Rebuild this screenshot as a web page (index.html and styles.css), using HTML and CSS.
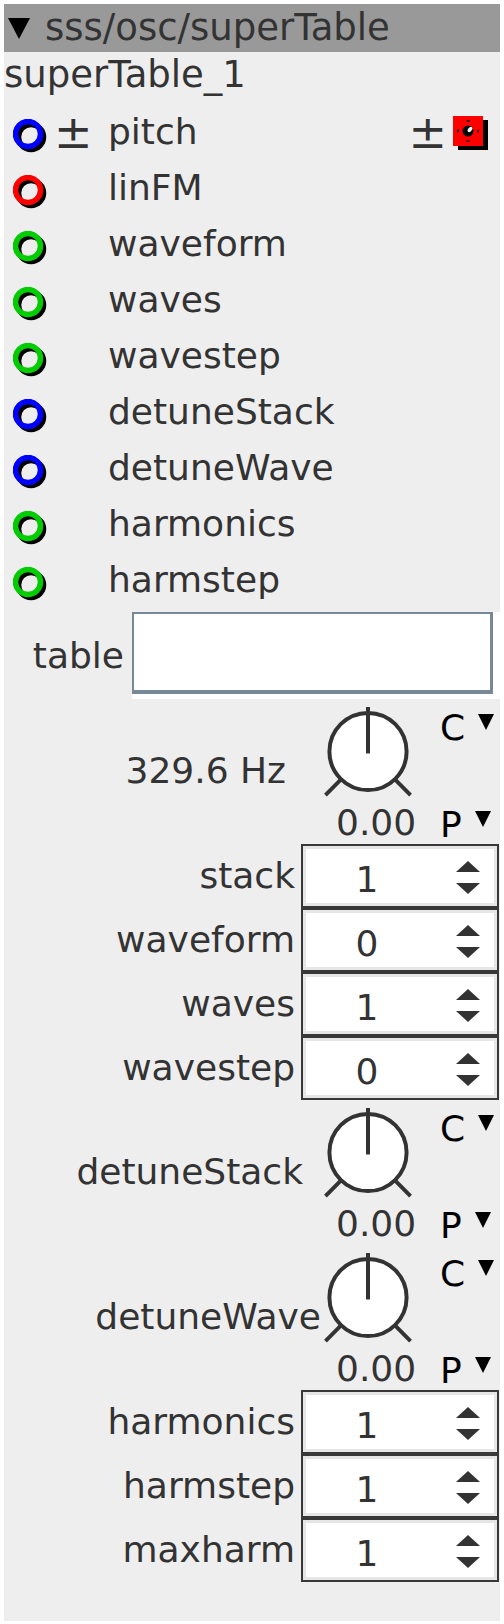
FILE: index.html
```html
<!DOCTYPE html>
<html lang="en">
<head>
    <meta charset="UTF-8">
    <meta name="viewport" content="width=device-width, initial-scale=1.0">
    <link rel="stylesheet" href="styles.css">
    <title>sss/osc/superTable</title>
</head>
<body>
    <div class="node">
        <div class="node-head"><span class="head-caret"></span>sss/osc/superTable</div>
        <div class="node-name">superTable_1</div>

        <ul class="ports">
            <li class="port">
                <svg class="jack jack-blue" viewBox="0 0 36 36"><circle class="jack-shadow" cx="18" cy="18" r="12.5"/><circle class="jack-ring" cx="15" cy="15" r="12.5"/><ellipse class="jack-shine" cx="19" cy="14" rx="2" ry="3.5"/></svg>
                <span class="sign">±</span>
                <span class="port-name">pitch</span>
                <span class="port-out">
                    <span class="sign-out">±</span>
                    <svg class="out-jack" viewBox="0 0 36 36"><rect x="5" y="4" width="30" height="30" fill="#000"/><rect x="0" y="0" width="30" height="30" fill="#f00"/><circle cx="15" cy="15" r="10" class="out-dots"/><circle cx="15" cy="15" r="5.5" fill="#000"/><ellipse cx="17" cy="13.5" rx="1.8" ry="3" fill="#fff" transform="rotate(40 17 13.5)"/></svg>
                </span>
            </li>
            <li class="port">
                <svg class="jack jack-red" viewBox="0 0 36 36"><circle class="jack-shadow" cx="18" cy="18" r="12.5"/><circle class="jack-ring" cx="15" cy="15" r="12.5"/><ellipse class="jack-shine" cx="19" cy="14" rx="2" ry="3.5"/></svg>
                <span class="sign"></span>
                <span class="port-name">linFM</span>
            </li>
            <li class="port">
                <svg class="jack jack-green" viewBox="0 0 36 36"><circle class="jack-shadow" cx="18" cy="18" r="12.5"/><circle class="jack-ring" cx="15" cy="15" r="12.5"/><ellipse class="jack-shine" cx="19" cy="14" rx="2" ry="3.5"/></svg>
                <span class="sign"></span>
                <span class="port-name">waveform</span>
            </li>
            <li class="port">
                <svg class="jack jack-green" viewBox="0 0 36 36"><circle class="jack-shadow" cx="18" cy="18" r="12.5"/><circle class="jack-ring" cx="15" cy="15" r="12.5"/><ellipse class="jack-shine" cx="19" cy="14" rx="2" ry="3.5"/></svg>
                <span class="sign"></span>
                <span class="port-name">waves</span>
            </li>
            <li class="port">
                <svg class="jack jack-green" viewBox="0 0 36 36"><circle class="jack-shadow" cx="18" cy="18" r="12.5"/><circle class="jack-ring" cx="15" cy="15" r="12.5"/><ellipse class="jack-shine" cx="19" cy="14" rx="2" ry="3.5"/></svg>
                <span class="sign"></span>
                <span class="port-name">wavestep</span>
            </li>
            <li class="port">
                <svg class="jack jack-blue" viewBox="0 0 36 36"><circle class="jack-shadow" cx="18" cy="18" r="12.5"/><circle class="jack-ring" cx="15" cy="15" r="12.5"/><ellipse class="jack-shine" cx="19" cy="14" rx="2" ry="3.5"/></svg>
                <span class="sign"></span>
                <span class="port-name">detuneStack</span>
            </li>
            <li class="port">
                <svg class="jack jack-blue" viewBox="0 0 36 36"><circle class="jack-shadow" cx="18" cy="18" r="12.5"/><circle class="jack-ring" cx="15" cy="15" r="12.5"/><ellipse class="jack-shine" cx="19" cy="14" rx="2" ry="3.5"/></svg>
                <span class="sign"></span>
                <span class="port-name">detuneWave</span>
            </li>
            <li class="port">
                <svg class="jack jack-green" viewBox="0 0 36 36"><circle class="jack-shadow" cx="18" cy="18" r="12.5"/><circle class="jack-ring" cx="15" cy="15" r="12.5"/><ellipse class="jack-shine" cx="19" cy="14" rx="2" ry="3.5"/></svg>
                <span class="sign"></span>
                <span class="port-name">harmonics</span>
            </li>
            <li class="port">
                <svg class="jack jack-green" viewBox="0 0 36 36"><circle class="jack-shadow" cx="18" cy="18" r="12.5"/><circle class="jack-ring" cx="15" cy="15" r="12.5"/><ellipse class="jack-shine" cx="19" cy="14" rx="2" ry="3.5"/></svg>
                <span class="sign"></span>
                <span class="port-name">harmstep</span>
            </li>
        </ul>

        <div class="field-row">
            <label class="field-label" for="table">table</label>
            <div class="field-well"><div class="field" id="table"></div></div>
        </div>

        <div class="knob-row">
            <div class="knob-label knob-label-hz">329.6 Hz</div>
            <div class="knob-dial">
                <svg class="knob" viewBox="0 0 92 96"><line x1="20" y1="75" x2="3" y2="92"/><line x1="72" y1="75" x2="89" y2="92"/><circle cx="46" cy="48" r="39"/><line x1="46" y1="3" x2="46" y2="50"/></svg>
                <div class="knob-value">0.00</div>
            </div>
            <div class="knob-side">
                <div class="mode">C<span class="caret"></span></div>
                <div class="mode">P<span class="caret"></span></div>
            </div>
        </div>

        <div class="spin-row">
            <span class="spin-label">stack</span>
            <div class="spin-box"><div class="spin-field"><span class="spin-value">1</span><svg class="spin-arrows" viewBox="0 0 24 36"><polygon points="0,14 12,3 24,14"/><polygon points="0,25 24,25 12,36"/></svg></div></div>
        </div>
        <div class="spin-row">
            <span class="spin-label">waveform</span>
            <div class="spin-box"><div class="spin-field"><span class="spin-value">0</span><svg class="spin-arrows" viewBox="0 0 24 36"><polygon points="0,14 12,3 24,14"/><polygon points="0,25 24,25 12,36"/></svg></div></div>
        </div>
        <div class="spin-row">
            <span class="spin-label">waves</span>
            <div class="spin-box"><div class="spin-field"><span class="spin-value">1</span><svg class="spin-arrows" viewBox="0 0 24 36"><polygon points="0,14 12,3 24,14"/><polygon points="0,25 24,25 12,36"/></svg></div></div>
        </div>
        <div class="spin-row">
            <span class="spin-label">wavestep</span>
            <div class="spin-box"><div class="spin-field"><span class="spin-value">0</span><svg class="spin-arrows" viewBox="0 0 24 36"><polygon points="0,14 12,3 24,14"/><polygon points="0,25 24,25 12,36"/></svg></div></div>
        </div>

        <div class="knob-row">
            <div class="knob-label knob-label-stack">detuneStack</div>
            <div class="knob-dial">
                <svg class="knob" viewBox="0 0 92 96"><line x1="20" y1="75" x2="3" y2="92"/><line x1="72" y1="75" x2="89" y2="92"/><circle cx="46" cy="48" r="39"/><line x1="46" y1="3" x2="46" y2="50"/></svg>
                <div class="knob-value">0.00</div>
            </div>
            <div class="knob-side">
                <div class="mode">C<span class="caret"></span></div>
                <div class="mode">P<span class="caret"></span></div>
            </div>
        </div>

        <div class="knob-row">
            <div class="knob-label knob-label-wave">detuneWave</div>
            <div class="knob-dial">
                <svg class="knob" viewBox="0 0 92 96"><line x1="20" y1="75" x2="3" y2="92"/><line x1="72" y1="75" x2="89" y2="92"/><circle cx="46" cy="48" r="39"/><line x1="46" y1="3" x2="46" y2="50"/></svg>
                <div class="knob-value">0.00</div>
            </div>
            <div class="knob-side">
                <div class="mode">C<span class="caret"></span></div>
                <div class="mode">P<span class="caret"></span></div>
            </div>
        </div>

        <div class="spin-row">
            <span class="spin-label">harmonics</span>
            <div class="spin-box"><div class="spin-field"><span class="spin-value">1</span><svg class="spin-arrows" viewBox="0 0 24 36"><polygon points="0,14 12,3 24,14"/><polygon points="0,25 24,25 12,36"/></svg></div></div>
        </div>
        <div class="spin-row">
            <span class="spin-label">harmstep</span>
            <div class="spin-box"><div class="spin-field"><span class="spin-value">1</span><svg class="spin-arrows" viewBox="0 0 24 36"><polygon points="0,14 12,3 24,14"/><polygon points="0,25 24,25 12,36"/></svg></div></div>
        </div>
        <div class="spin-row">
            <span class="spin-label">maxharm</span>
            <div class="spin-box"><div class="spin-field"><span class="spin-value">1</span><svg class="spin-arrows" viewBox="0 0 24 36"><polygon points="0,14 12,3 24,14"/><polygon points="0,25 24,25 12,36"/></svg></div></div>
        </div>
    </div>
</body>
</html>
```

FILE: styles.css
```css
body {
    margin: 4px;
    background-color: #fff;
    font-family: "DejaVu Sans", "Liberation Sans", sans-serif;
    color: #333;
}

.node {
    width: 496px;
    padding-bottom: 39px;
    background-color: #eee;
    font-size: 36px;
}

/* title bar */
.node-head {
    display: flex;
    align-items: center;
    height: 48px;
    padding-left: 4px;
    background-color: #999;
    font-size: 37px;
    line-height: 48px;
}

.head-caret {
    width: 0;
    height: 0;
    margin: 1px 15px 0 0;
    border-left: 11px solid transparent;
    border-right: 11px solid transparent;
    border-top: 21px solid #000;
}

.node-name {
    font-size: 37px;
    line-height: 45px;
}

/* inlets */
.ports {
    list-style: none;
    margin: 0;
    padding: 7px 11px 0 9px;
}

.port {
    display: flex;
    align-items: center;
    height: 56px;
    line-height: 42px;
}

.jack {
    align-self: flex-start;
    width: 36px;
    height: 36px;
    margin-top: 15px;
}

.jack-shadow {
    fill: none;
    stroke: #000;
    stroke-width: 5.5;
}

.jack-ring {
    fill: none;
    stroke-width: 5.5;
}

.jack-shine {
    fill: #eee;
}

.jack-blue .jack-ring { stroke: #00f; }
.jack-red .jack-ring { stroke: #f00; }
.jack-green .jack-ring { stroke: #0c0; }

.sign {
    width: 54px;
    margin-left: 5px;
    font-size: 46px;
    line-height: 42px;
}

.port-out {
    display: flex;
    align-items: center;
    align-self: stretch;
    margin-left: auto;
}

.sign-out {
    margin-right: 6px;
    font-size: 46px;
}

.out-jack {
    width: 36px;
    height: 36px;
    margin-top: 4px;
}

.out-dots {
    fill: none;
    stroke: #000;
    stroke-width: 1.5;
    stroke-dasharray: 3 12.7;
    stroke-dashoffset: 1.5;
}

/* table name field */
.field-row {
    display: flex;
    align-items: center;
    margin-top: 4px;
}

.field-label {
    flex: 1;
    padding-right: 8px;
    text-align: right;
    line-height: 42px;
}

.field-well {
    width: 368px;
    height: 87px;
    box-sizing: border-box;
    padding: 0 7px 5px 0;
    background-color: #fff;
}

.field {
    height: 100%;
    box-sizing: border-box;
    border: solid #778899;
    border-width: 2px 3px 4px 2px;
}

/* knobs */
.knob-row {
    display: flex;
    height: 145px;
}

.knob-label {
    flex: 1;
    padding-top: 51px;
    text-align: right;
    line-height: 42px;
    white-space: nowrap;
}

.knob-label-hz { padding-right: 36px; }
.knob-label-stack { padding-right: 19px; }
.knob-label-wave { padding-right: 1px; }

.knob-dial {
    display: flex;
    flex-direction: column;
    width: 92px;
    padding-top: 5px;
}

.knob {
    display: block;
    width: 92px;
    height: 96px;
    fill: #fff;
    stroke: #333;
    stroke-width: 4;
}

.knob-value {
    padding: 3px 0 0 14px;
    text-align: center;
    line-height: 42px;
    white-space: nowrap;
}

.knob-side {
    display: flex;
    flex-direction: column;
    justify-content: space-between;
    width: 60px;
    margin-left: 26px;
    padding: 8px 0 0;
    color: #000;
}

.mode {
    display: flex;
    align-items: flex-start;
    line-height: 42px;
}

.mode:last-child {
    margin-bottom: -2px;
}

.caret {
    width: 0;
    height: 0;
    margin: 7px 0 0 13px;
    border-left: 8.5px solid transparent;
    border-right: 8.5px solid transparent;
    border-top: 16px solid #000;
}

/* number boxes */
.spin-row {
    display: flex;
    align-items: center;
    height: 64px;
}

.spin-label {
    flex: 1;
    padding-right: 6px;
    text-align: right;
    line-height: 42px;
}

.spin-box {
    display: flex;
    width: 198px;
    height: 64px;
    box-sizing: border-box;
    margin-right: 1px;
    border: 2px solid #383838;
}

.spin-field {
    display: flex;
    align-items: center;
    flex: 1;
    border: 3px solid #e6e6e6;
    background-color: #fff;
}

.spin-value {
    width: 122px;
    margin-top: 8px;
    text-align: center;
    line-height: 42px;
}

.spin-arrows {
    width: 24px;
    height: 36px;
    margin-left: 28px;
    fill: #333;
}
```
